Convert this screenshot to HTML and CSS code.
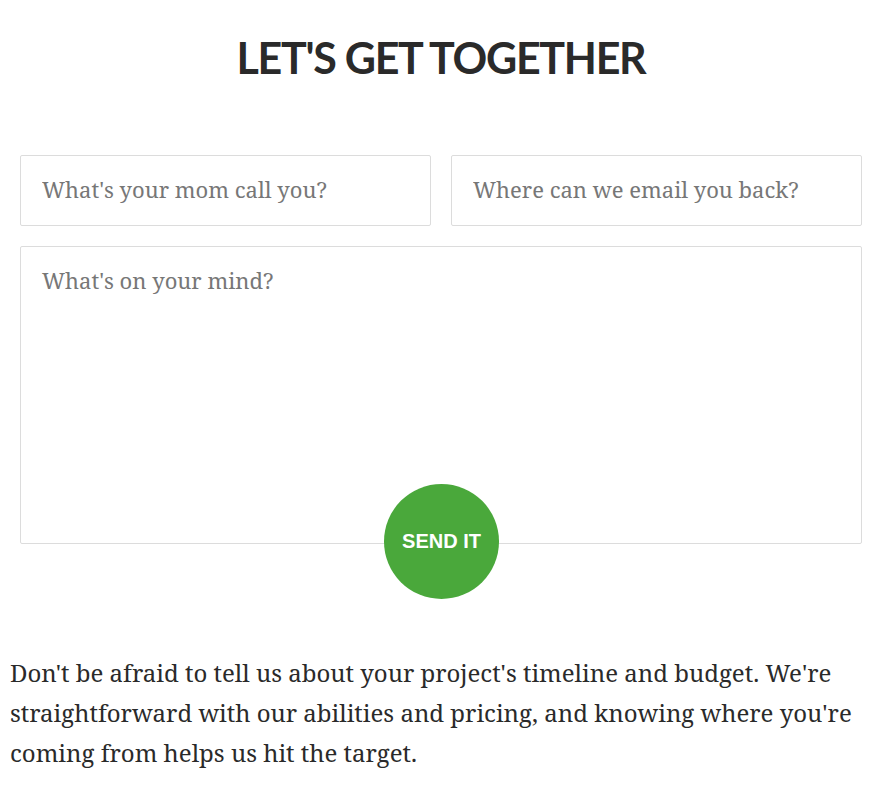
FILE: index.html
```html
<!DOCTYPE html>
<html>
<head>
<meta charset="utf-8">
<link rel="stylesheet" href="styles.css">
</head>
<body>
<div class="page">
  <h1 class="title">LET'S GET TOGETHER</h1>
  <form class="contact">
    <div class="row">
      <input class="field" type="text" placeholder="What's your mom call you?">
      <input class="field" type="text" placeholder="Where can we email you back?">
    </div>
    <div class="message-wrap">
      <textarea class="field message" placeholder="What's on your mind?"></textarea>
      <button class="send" type="button">SEND IT</button>
    </div>
  </form>
  <p class="note">Don't be afraid to tell us about your project's timeline and budget. We're straightforward with our abilities and pricing, and knowing where you're coming from helps us hit the target.</p>
</div>
</body>
</html>
```
FILE: styles.css
```css
html, body {
  margin: 0;
  padding: 0;
  background: #fff;
}
.page {
  width: 887px;
  box-sizing: border-box;
  padding: 0 15px 0 10px;
}
.title {
  margin: 0;
  padding-top: 34px;
  text-align: center;
  font-family: "Lato", sans-serif;
  font-weight: 700;
  font-size: 43px;
  line-height: 48px;
  color: #2a2a2a;
  letter-spacing: -1.3px;
}
.contact {
  margin: 73px 10px 0;
}
.row {
  display: flex;
  gap: 20px;
  margin-bottom: 20px;
}
.field {
  display: block;
  box-sizing: border-box;
  width: 100%;
  border: 1px solid #dcdcdc;
  border-radius: 2px;
  background: #fff;
  font-family: "Noto Serif", "Droid Serif", "DejaVu Serif", serif;
  font-size: 22px;
  color: #333;
  padding: 0 21px 3px;
  height: 71px;
  outline: none;
}
.field::placeholder {
  color: #777;
  opacity: 1;
}
.message-wrap {
  position: relative;
  height: 298px;
}
.message {
  height: 298px;
  padding: 17px 21px;
  resize: none;
  line-height: 32px;
}
.send {
  position: absolute;
  left: 364px;
  top: 238px;
  width: 115px;
  height: 115px;
  border-radius: 50%;
  border: none;
  background: #4aa83b;
  color: #fff;
  font-family: "Liberation Sans", Arial, sans-serif;
  font-weight: 700;
  font-size: 20px;
  padding: 0;
}
.note {
  margin: 109px 0 0;
  font-family: "Noto Serif", "Droid Serif", "DejaVu Serif", serif;
  font-size: 24px;
  line-height: 40px;
  color: #2a2a2a;
}
```
